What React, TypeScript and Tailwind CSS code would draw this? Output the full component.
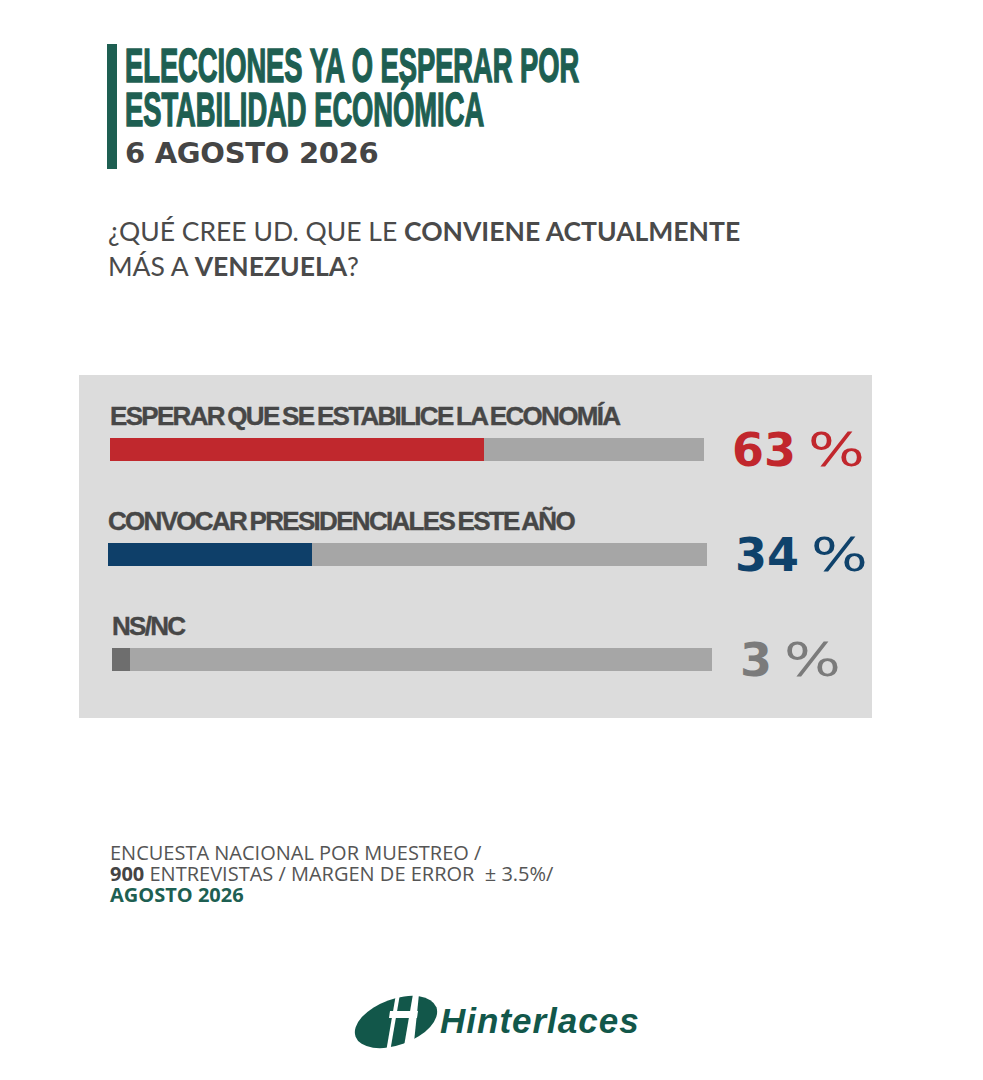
import React from "react";

const rows = [
    {
        label: "ESPERAR QUE SE ESTABILICE LA ECONOMÍA",
        value: 63,
        fill: "bg-[#c0282d]",
        color: "text-[#c1272d]",
        pad: "pl-[31px]",
        track: "w-[594px]",
    },
    {
        label: "CONVOCAR PRESIDENCIALES ESTE AÑO",
        value: 34,
        fill: "bg-[#0e3f69]",
        color: "text-[#0f426b]",
        pad: "pl-[29px]",
        track: "w-[599px]",
    },
    {
        label: "NS/NC",
        value: 3,
        fill: "bg-[#6e6e6e]",
        color: "text-[#7b7b7b]",
        pad: "pl-[33px]",
        track: "w-[600px]",
    },
];

function Logo() {
    return (
        <div className="flex items-start pl-[350px] mt-[89px]">
            <svg width="90" height="58" viewBox="0 0 90 58">
                <ellipse cx="46" cy="28" rx="43" ry="23" transform="rotate(-20 46 28)" fill="#12574a" />
                <polygon points="46,0 50,0 40,58 36,58" fill="#fff" />
                <polygon points="63,0 69,0 63,58 53,58" fill="#fff" />
                <polygon points="40,17 68,17 67,24 39,24" fill="#fff" />
            </svg>
            <span className="mt-[9px] font-['Liberation_Sans',sans-serif] font-bold italic text-[35px] leading-[35px] tracking-[1px] text-[#12574a]">
                Hinterlaces
            </span>
        </div>
    );
}

export default function App() {
    return (
        <div className="w-[983px] h-[1080px] bg-white overflow-hidden pt-[44px]">
            {/* Header */}
            <div className="flex ml-[107px]">
                <div className="w-[10px] bg-[#1e5f52]" />
                <div className="pl-[8px]">
                    <h1 className="origin-top-left scale-x-[0.575] whitespace-nowrap font-['Liberation_Sans',sans-serif] font-bold text-[47.5px] leading-[44px] text-[#1e5f52] [-webkit-text-stroke:1.5px_#1e5f52]">
                        ELECCIONES YA O ESPERAR POR
                        <br />
                        ESTABILIDAD ECONÓMICA
                    </h1>
                    <p className="mt-[5px] font-['DejaVu_Sans',sans-serif] font-bold text-[29px] leading-[32px] tracking-[-0.3px] text-[#454545]">
                        6 AGOSTO 2026
                    </p>
                </div>
            </div>

            {/* Question */}
            <p className="mt-[45px] ml-[108px] font-['Lato',sans-serif] text-[26.5px] leading-[35px] text-[#4a4a4a]">
                ¿QUÉ CREE UD. QUE LE <b className="font-bold">CONVIENE ACTUALMENTE</b>
                <br />
                MÁS A <b className="font-bold">VENEZUELA</b>?
            </p>

            {/* Chart panel */}
            <div className="mt-[91px] ml-[79px] w-[793px] h-[343px] bg-[#dcdcdc] pt-[28px] flex flex-col gap-[47px]">
                {rows.map((row) => (
                    <div key={row.label} className={row.pad}>
                        <div className="font-['Liberation_Sans',sans-serif] font-bold text-[26px] leading-[26px] tracking-[-1.7px] [word-spacing:-2px] text-[#474747] [-webkit-text-stroke:0.4px_#474747] whitespace-nowrap">
                            {row.label}
                        </div>
                        <div className="mt-[9px] h-[23px] flex items-center">
                            <div className={`${row.track} h-[23px] bg-[#a6a6a6] flex`}>
                                <div className={`${row.fill} h-full`} style={{ width: `${row.value}%` }} />
                            </div>
                            <div className={`ml-[28px] whitespace-nowrap font-['DejaVu_Sans',sans-serif] text-[46px] leading-[46px] ${row.color}`}>
                                <span className="font-bold">{row.value}</span>
                                <span className="inline-block ml-[12px] origin-left scale-x-[1.3]">%</span>
                            </div>
                        </div>
                    </div>
                ))}
            </div>

            {/* Footer */}
            <div className="mt-[124px] ml-[110px] font-['Open_Sans',sans-serif] text-[20px] leading-[21px] text-[#555555]">
                <p>ENCUESTA NACIONAL POR MUESTREO /</p>
                <p>
                    <b className="font-bold text-[#444444]">900</b> ENTREVISTAS / MARGEN DE ERROR&nbsp; ± 3.5%/
                </p>
                <p className="font-bold text-[#1e5f52]">AGOSTO 2026</p>
            </div>

            <Logo />
        </div>
    );
}
